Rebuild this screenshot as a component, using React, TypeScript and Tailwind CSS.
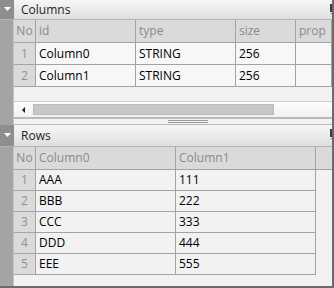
import React from "react";

type Col = { label: string; w?: string };

const columnCols: Col[] = [
    { label: "id", w: "w-[100px]" },
    { label: "type", w: "w-[100px]" },
    { label: "size", w: "w-[60px]" },
    { label: "prop" },
];

const columnRows = [
    ["Column0", "STRING", "256", ""],
    ["Column1", "STRING", "256", ""],
];

const rowCols: Col[] = [
    { label: "Column0", w: "w-[140px]" },
    { label: "Column1", w: "w-[140px]" },
];

const rowRows = [
    ["AAA", "111"],
    ["BBB", "222"],
    ["CCC", "333"],
    ["DDD", "444"],
    ["EEE", "555"],
];

function PanelHeader({ title, tall }: { title: string; tall?: boolean }) {
    return (
        <div
            className={`flex shrink-0 border-b border-[#b4b4b4] ${tall ? "h-[22px]" : "h-[20px]"}`}
        >
            <div
                className={`flex w-[14px] items-start justify-center bg-[#8e8e8e] ${tall ? "pt-[8px]" : "pt-[7px]"}`}
            >
                <svg width="7" height="4" viewBox="0 0 7 4">
                    <path d="M0 0H7L3.5 4Z" fill="#ffffff" />
                </svg>
            </div>
            <div className="flex flex-1 items-center bg-linear-to-b from-[#f7f7f7] to-[#dedede] pl-[7px] text-[12px] leading-none text-[#1e1e1e]">
                <span className="flex-1">{title}</span>
                {/* clipped button at the window edge */}
                <span className="flex h-full w-[2px] flex-col items-end pt-[4px]">
                    <span className="h-[8px] w-[2px] bg-[#3c3c3c]" />
                    <span className="mt-[1px] h-[1px] w-[1px] bg-[#e03a2a]" />
                </span>
            </div>
        </div>
    );
}

function HeaderCell({ label, w }: Col) {
    return (
        <div
            className={`${w ?? "flex-1"} flex items-center border-r border-[#a3a3a3] pl-[3px] text-[#8a8a8a]`}
        >
            {label}
        </div>
    );
}

function NoCell({ children, head }: { children: React.ReactNode; head?: boolean }) {
    return (
        <div
            className={`flex w-[22px] shrink-0 items-center justify-center border-r border-[#a3a3a3] bg-[#dadada] ${head ? "text-[#8a8a8a]" : "text-[#909090]"}`}
        >
            {children}
        </div>
    );
}

function Gutter() {
    return <div className="w-[14px] shrink-0 border-r border-[#c4c4c4] bg-[#a4a4a4]" />;
}

export default function App() {
    return (
        <div className="flex h-[288px] w-[334px] flex-col overflow-hidden border-b-2 border-r-2 border-[#6b6b6b] bg-[#f2f2f2] font-['Open_Sans','Noto_Sans',sans-serif] text-[12px]">
            {/* Columns panel */}
            <PanelHeader title="Columns" />
            <div className="flex h-[105px] shrink-0">
                <Gutter />
                <div className="flex min-w-0 flex-1 flex-col">
                    <div className="flex h-[23px] shrink-0 border-b border-[#a3a3a3] bg-[#dadada]">
                        <NoCell head>No</NoCell>
                        {columnCols.map((c) => (
                            <HeaderCell key={c.label} {...c} />
                        ))}
                    </div>
                    {columnRows.map((row, i) => (
                        <div
                            key={i}
                            className="flex h-[22px] shrink-0 border-b border-[#a3a3a3] bg-[#f7f7f7]"
                        >
                            <NoCell>{i + 1}</NoCell>
                            {row.map((v, j) => (
                                <div
                                    key={j}
                                    className={`${columnCols[j].w ?? "flex-1"} flex items-center border-r border-[#a3a3a3] pl-[3px] text-black`}
                                >
                                    {v}
                                </div>
                            ))}
                        </div>
                    ))}
                    <div className="flex-1" />
                    {/* horizontal scrollbar */}
                    <div className="flex h-[16px] shrink-0 items-center border-t border-[#cccccc] bg-linear-to-b from-[#fdfdfd] to-[#f1f1f1] pl-[8px]">
                        <svg width="3" height="6" viewBox="0 0 3 6">
                            <path d="M3 0V6L0 3Z" fill="#1a1a1a" />
                        </svg>
                        <div className="ml-[8px] h-[11px] w-[241px] border border-[#bcbcbc] bg-[#c7c7c7]" />
                    </div>
                    {/* splitter */}
                    <div className="flex h-[8px] shrink-0 flex-col items-center justify-center gap-[1px] border-t-2 border-b border-[#bababa] bg-[#f3f3f3] pl-[30px]">
                        <div className="h-px w-[40px] bg-[#9c9c9c]" />
                        <div className="h-px w-[40px] bg-[#9c9c9c]" />
                    </div>
                </div>
            </div>

            {/* Rows panel */}
            <PanelHeader title="Rows" tall />
            <div className="flex flex-1">
                <Gutter />
                <div className="flex min-w-0 flex-1 flex-col">
                    <div className="flex h-[23px] shrink-0 border-b border-[#a3a3a3] bg-[#dadada]">
                        <NoCell head>No</NoCell>
                        {rowCols.map((c) => (
                            <HeaderCell key={c.label} {...c} />
                        ))}
                        <div className="flex-1" />
                    </div>
                    {rowRows.map((row, i) => (
                        <div key={i} className="flex h-[21px] shrink-0">
                            <div className="flex border-b border-[#a3a3a3]">
                                <NoCell>{i + 1}</NoCell>
                                {row.map((v, j) => (
                                    <div
                                        key={j}
                                        className={`${rowCols[j].w} flex items-center border-r border-[#a3a3a3] pl-[3px] text-black`}
                                    >
                                        {v}
                                    </div>
                                ))}
                            </div>
                        </div>
                    ))}
                </div>
            </div>
        </div>
    );
}
